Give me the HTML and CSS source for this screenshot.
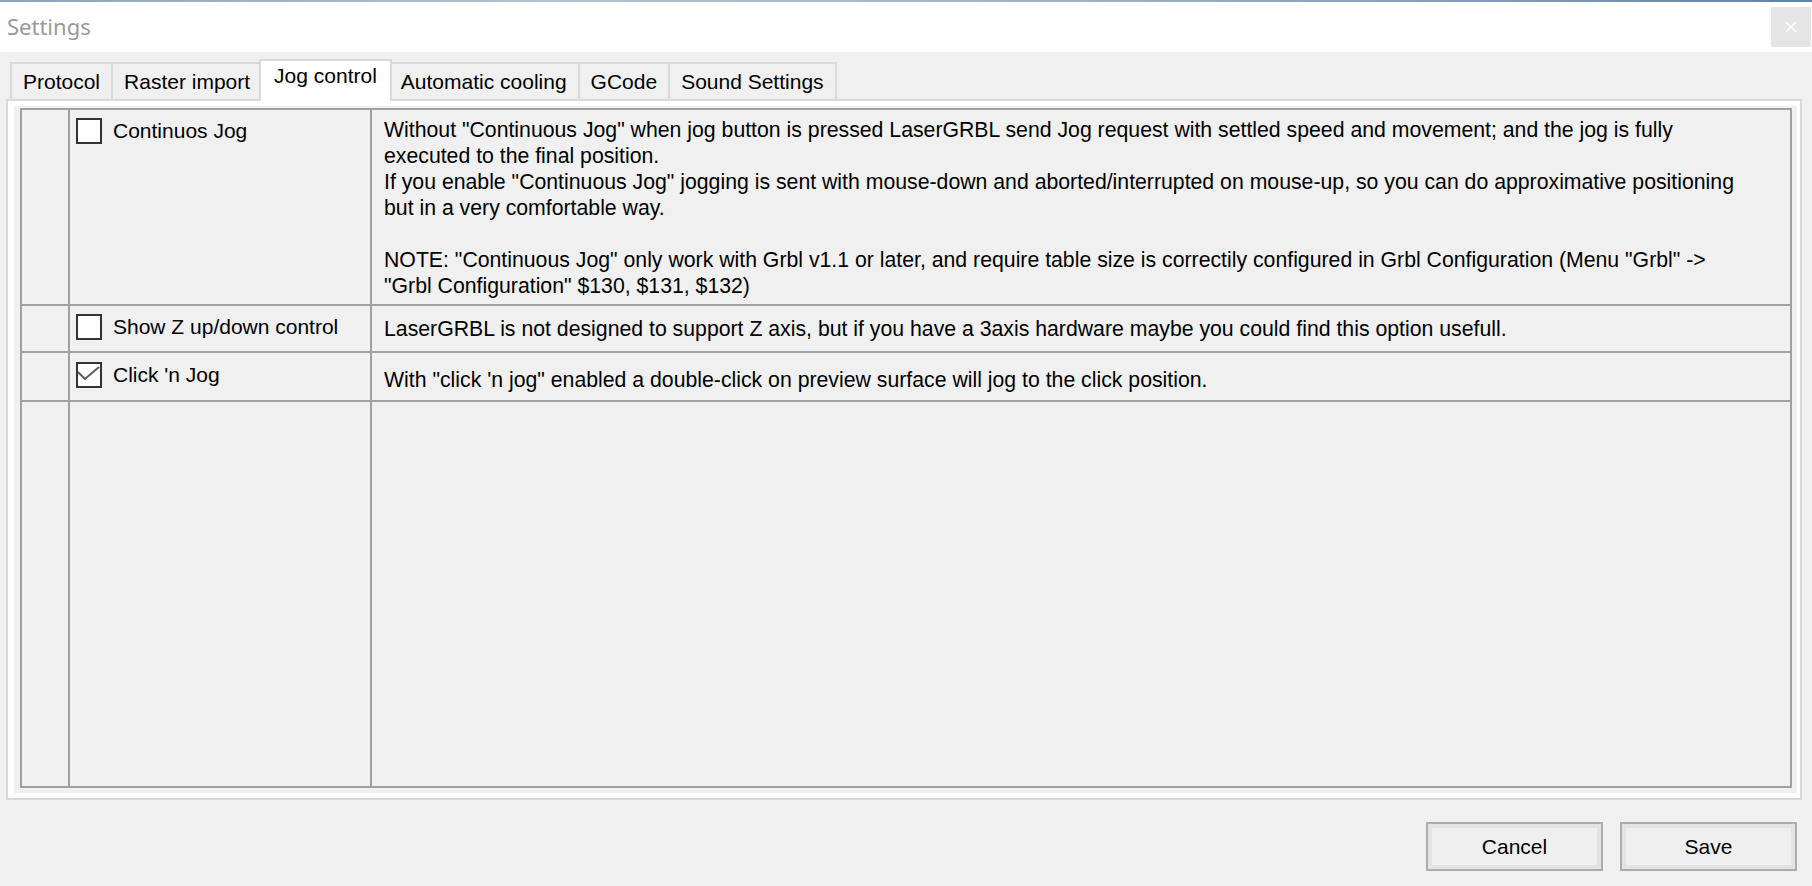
FILE: index.html
```html
<!DOCTYPE html>
<html>
<head>
<meta charset="utf-8">
<title>Settings</title>
<link rel="stylesheet" href="styles.css">
</head>
<body>
<div class="window">
  <div class="topline"></div>
  <header class="titlebar">
    <span class="title">Settings</span>
    <div class="close"><svg width="12" height="12" viewBox="0 0 12 12"><path d="M1 1 L11 11 M11 1 L1 11" stroke="#ffffff" stroke-width="1.4" fill="none"/></svg></div>
  </header>
  <main class="content">
    <nav class="tabs">
      <div class="tab">Protocol</div>
      <div class="tab">Raster import</div>
      <div class="tab active">Jog control</div>
      <div class="tab">Automatic cooling</div>
      <div class="tab">GCode</div>
      <div class="tab">Sound Settings</div>
    </nav>
    <section class="panel">
      <div class="page">
        <div class="grid">
          <div class="cell"></div>
          <div class="cell opt"><label class="check"><span class="cb"></span><span>Continuos Jog</span></label></div>
          <div class="cell desc"><p>Without "Continuous Jog" when jog button is pressed LaserGRBL send Jog request with settled speed and movement; and the jog is fully<br>executed to the final position.<br>If you enable "Continuous Jog" jogging is sent with mouse-down and aborted/interrupted on mouse-up, so you can do approximative positioning<br>but in a very comfortable way.<br><br>NOTE: "Continuous Jog" only work with Grbl v1.1 or later, and require table size is correctily configured in Grbl Configuration (Menu "Grbl" -&gt;<br>"Grbl Configuration" $130, $131, $132)</p></div>

          <div class="cell"></div>
          <div class="cell opt"><label class="check"><span class="cb"></span><span>Show Z up/down control</span></label></div>
          <div class="cell desc"><p>LaserGRBL is not designed to support Z axis, but if you have a 3axis hardware maybe you could find this option usefull.</p></div>

          <div class="cell"></div>
          <div class="cell opt opt-last"><label class="check"><span class="cb"><svg width="22" height="22" viewBox="0 0 22 22"><path d="M0 8 L7 15 L21 3" stroke="#5a5a5a" stroke-width="2" fill="none"/></svg></span><span>Click 'n Jog</span></label></div>
          <div class="cell desc desc-last"><p>With "click 'n jog" enabled a double-click on preview surface will jog to the click position.</p></div>

          <div class="cell"></div>
          <div class="cell"></div>
          <div class="cell"></div>
        </div>
      </div>
    </section>
    <footer class="footer">
      <button class="btn">Cancel</button>
      <button class="btn">Save</button>
    </footer>
  </main>
</div>
</body>
</html>
```
FILE: styles.css
```css
html, body {
  margin: 0;
  padding: 0;
}
body {
  background: #f0f0f0;
  font-family: "Liberation Sans", Arial, sans-serif;
  font-size: 21px;
  color: #000;
  width: 1812px;
  height: 886px;
  overflow: hidden;
}
.window {
  display: flex;
  flex-direction: column;
  height: 886px;
}
.topline {
  height: 2px;
  background: linear-gradient(90deg, #8ea3b8 0%, #b4c2d0 30%, #9fb1c3 60%, #7f98b2 85%, #5f84a6 100%);
}
.titlebar {
  height: 50px;
  background: #ffffff;
  display: flex;
  justify-content: space-between;
  align-items: flex-start;
}
.title {
  font-family: "Noto Sans", "Open Sans", sans-serif;
  font-size: 22px;
  color: #999999;
  line-height: 32px;
  padding: 8px 0 0 7px;
}
.close {
  width: 40px;
  height: 40px;
  margin: 5px 1px 0 0;
  background: #e5e5e5;
  display: flex;
  align-items: center;
  justify-content: center;
}
.content {
  flex: 1;
  display: flex;
  flex-direction: column;
  padding: 7px 10px 0 6px;
}
.tabs {
  display: flex;
  align-items: flex-end;
  height: 40px;
  padding-left: 4px;
}
.tab {
  height: 37px;
  box-sizing: border-box;
  border: 2px solid #d9d9d9;
  border-bottom: 0;
  padding: 0 11px;
  margin-right: -2px;
  line-height: 35px;
  white-space: nowrap;
  background: #f0f0f0;
}
.tab.active {
  position: relative;
  z-index: 1;
  height: 42px;
  margin-bottom: -2px;
  margin-left: -2px;
  margin-right: -4px;
  padding: 0 13px;
  line-height: 30px;
  background: #ffffff;
}
.panel {
  border: 2px solid #d9d9d9;
  background: #ffffff;
  padding: 5px 3px 5px 6px;
}
.page {
  background: #f0f0f0;
  padding: 2px 5px 5px 6px;
  display: flex;
}
.grid {
  flex: 1;
  height: 676px;
  display: grid;
  grid-template-columns: 46px 300px 1fr;
  grid-template-rows: 194px 45px 47px 1fr;
  gap: 2px;
  background: #a0a0a0;
  border: 2px solid #a0a0a0;
}
.cell {
  background: #f0f0f0;
}
.opt {
  padding: 8px 6px 0;
}
.opt-last {
  padding-top: 9px;
}
.check {
  display: flex;
  align-items: center;
  gap: 11px;
  line-height: 26px;
  white-space: nowrap;
}
.cb {
  width: 26px;
  height: 26px;
  box-sizing: border-box;
  border: 2px solid #333333;
  background: #ffffff;
  flex: none;
  display: flex;
}
.desc {
  display: flex;
  align-items: center;
  padding: 1px 12px 0;
  font-size: 21.25px;
  line-height: 26px;
}
.desc-last {
  padding-top: 6px;
}
.desc p {
  margin: 0;
}
.footer {
  display: flex;
  justify-content: flex-end;
  gap: 17px;
  padding: 22px 5px 0 0;
}
.btn {
  width: 177px;
  height: 49px;
  font-family: "Liberation Sans", Arial, sans-serif;
  font-size: 21px;
  color: #000;
  background: #efefef;
  border: 2px solid #adadad;
  box-shadow: inset 0 0 0 4px #e3e3e3;
  padding: 0;
}
```
